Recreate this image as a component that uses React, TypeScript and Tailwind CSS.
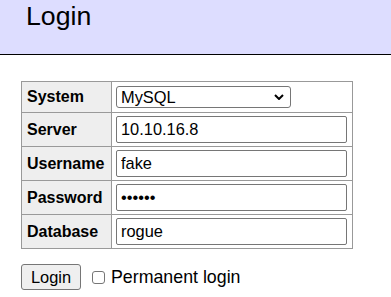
import React from "react";

export default function App() {
  const font = { fontFamily: '"Liberation Sans", Arial, sans-serif' };
  const th =
    "border border-[#999] bg-[#eee] text-left font-bold text-[16px] px-[5px] py-0 w-[90px]";
  const td = "border border-[#999] px-[4px] py-0";
  const input =
    "block w-[231px] h-[27px] border border-[#767676] rounded-[2px] bg-white px-[4px] text-[16.4px] text-black outline-none";
  return (
    <div className="w-[391px] h-[297px] bg-white text-black overflow-hidden" style={font}>
      <h2 className="m-0 h-[55px] bg-[#ddf] border-b border-black pl-[26px] text-[26.7px] leading-[32px] font-normal">
        Login
      </h2>
      <table className="ml-[21px] mt-[26px] border-collapse">
        <tbody>
          <tr className="h-[31px]">
            <th className={th}>System</th>
            <td className={td + " w-[241px]"}>
              <div className="relative w-[175px]">
                <select
                  className="block appearance-none w-[175px] h-[22px] border border-[#767676] rounded-[3px] bg-white pl-[4px] text-[16.4px] leading-[20px] text-black outline-none"
                  defaultValue="server"
                  style={font}
                >
                  <option value="server">MySQL</option>
                </select>
                <svg
                  className="absolute right-[7px] top-[8px] pointer-events-none"
                  width="10"
                  height="6"
                  viewBox="0 0 10 6"
                >
                  <path d="M1 1 L5 5 L9 1" stroke="#000" strokeWidth="2" fill="none" />
                </svg>
              </div>
            </td>
          </tr>
          <tr className="h-[34px]">
            <th className={th}>Server</th>
            <td className={td}>
              <input className={input} style={font} defaultValue="10.10.16.8" />
            </td>
          </tr>
          <tr className="h-[34px]">
            <th className={th}>Username</th>
            <td className={td}>
              <input className={input} style={font} defaultValue="fake" />
            </td>
          </tr>
          <tr className="h-[34px]">
            <th className={th}>Password</th>
            <td className={td}>
              <input className={input} style={font} type="password" defaultValue="secret" />
            </td>
          </tr>
          <tr className="h-[34px]">
            <th className={th}>Database</th>
            <td className={td}>
              <input className={input} style={font} defaultValue="rogue" />
            </td>
          </tr>
        </tbody>
      </table>
      <div className="flex items-center ml-[21px] mt-[15px]">
        <button
          className="w-[60px] h-[26px] border border-[#767676] rounded-[3px] bg-[#efefef] text-[16.4px] text-black"
          style={font}
        >
          Login
        </button>
        <label className="flex items-center ml-[11px] text-[17.8px]">
          <span className="inline-block w-[13px] h-[13px] border border-[#767676] rounded-[3px] bg-white mr-[6px]" />
          Permanent login
        </label>
      </div>
    </div>
  );
}
